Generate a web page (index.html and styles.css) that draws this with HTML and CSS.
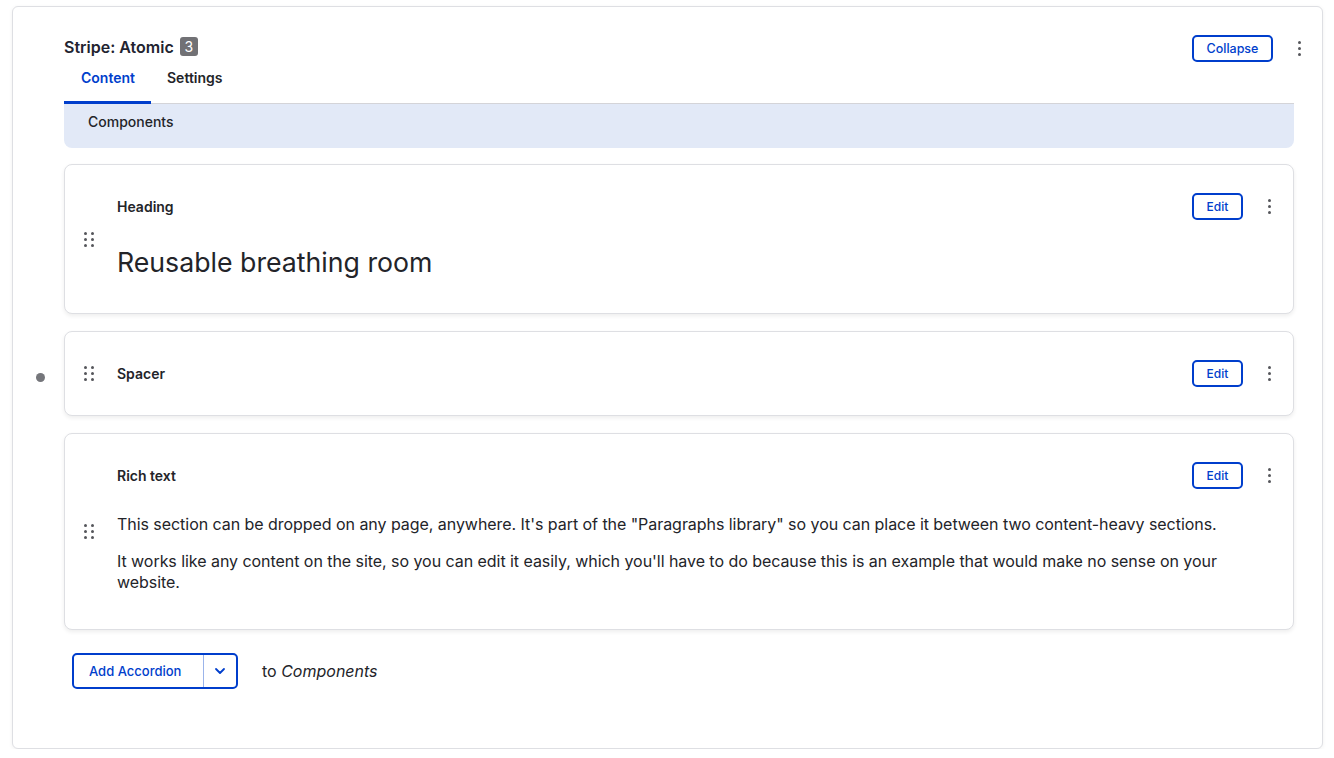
FILE: index.html
```html
<!DOCTYPE html>
<html lang="en">
<head>
<meta charset="utf-8">
<title>Stripe: Atomic</title>
<link rel="stylesheet" href="styles.css">
</head>
<body>
<div class="panel">
  <div class="panel-head">
    <div class="title">Stripe: Atomic <span class="badge">3</span></div>
    <div class="head-actions">
      <button class="btn btn-collapse">Collapse</button>
      <span class="kebab"><i></i><i></i><i></i></span>
    </div>
  </div>
  <div class="tabs">
    <span class="tab active">Content</span>
    <span class="tab">Settings</span>
  </div>
  <div class="section-bar">Components</div>

  <div class="card card-heading">
    <div class="handle"><span class="dots"><i></i><i></i><i></i><i></i><i></i><i></i></span></div>
    <div class="card-body">
      <div class="card-row">
        <span class="card-label">Heading</span>
        <div class="card-actions">
          <button class="btn btn-edit">Edit</button>
          <span class="kebab"><i></i><i></i><i></i></span>
        </div>
      </div>
      <div class="big-heading">Reusable breathing room</div>
    </div>
  </div>

  <div class="card card-spacer">
    <span class="status-dot"></span>
    <div class="handle"><span class="dots"><i></i><i></i><i></i><i></i><i></i><i></i></span></div>
    <div class="card-body">
      <div class="card-row">
        <span class="card-label">Spacer</span>
        <div class="card-actions">
          <button class="btn btn-edit">Edit</button>
          <span class="kebab"><i></i><i></i><i></i></span>
        </div>
      </div>
    </div>
  </div>

  <div class="card card-text">
    <div class="handle"><span class="dots"><i></i><i></i><i></i><i></i><i></i><i></i></span></div>
    <div class="card-body">
      <div class="card-row">
        <span class="card-label">Rich text</span>
        <div class="card-actions">
          <button class="btn btn-edit">Edit</button>
          <span class="kebab"><i></i><i></i><i></i></span>
        </div>
      </div>
      <div class="rich">
        <p>This section can be dropped on any page, anywhere. It's part of the "Paragraphs library" so you can place it between two content-heavy sections.</p>
        <p>It works like any content on the site, so you can edit it easily, which you'll have to do because this is an example that would make no sense on your website.</p>
      </div>
    </div>
  </div>

  <div class="add-row">
    <div class="split-btn">
      <span class="split-main">Add Accordion</span>
      <span class="split-toggle">
        <svg width="12" height="8" viewBox="0 0 12 8"><path d="M2 2l4 4 4-4" fill="none" stroke="#003ecc" stroke-width="1.8" stroke-linecap="round" stroke-linejoin="round"/></svg>
      </span>
    </div>
    <span class="add-to">to <em>Components</em></span>
  </div>
</div>
</body>
</html>
```

FILE: styles.css
```css
* { box-sizing: border-box; }
html, body { margin: 0; padding: 0; }
body {
  background: #ffffff;
  font-family: Inter, "Noto Sans", sans-serif;
  color: #232429;
}
.panel {
  margin: 6px 11px 0 12px;
  height: 743px;
  border: 1px solid #dedfe3;
  border-radius: 6px;
  background: #fff;
  box-shadow: 0 1px 4px rgba(0,0,0,0.06);
  padding: 27px 28px 0 51px;
}
.panel-head {
  display: flex;
  justify-content: space-between;
  align-items: center;
  margin-right: -10px;
  height: 26px;
}
.title {
  font-size: 16px;
  font-weight: 600;
  display: flex;
  align-items: center;
  gap: 6px;
  color: #222330;
  margin-top: -1px;
}
.badge {
  display: inline-block;
  background: #717175;
  color: #fff;
  font-size: 14px;
  font-weight: 400;
  border-radius: 3px;
  text-align: center;
  width: 18px;
  line-height: 19px;
  height: 19px;
}
.head-actions {
  display: flex;
  align-items: center;
  gap: 21px;
  padding-top: 2px;
}
.btn {
  font-family: Inter, "Noto Sans", sans-serif;
  background: #fff;
  color: #003ecc;
  border: 2px solid #003ecc;
  border-radius: 5px;
  font-weight: 500;
  cursor: pointer;
}
.btn-collapse {
  width: 81px;
  height: 27px;
  font-size: 12.5px;
  padding: 0;
}
.kebab {
  display: inline-flex;
  flex-direction: column;
  align-items: center;
  gap: 3px;
  width: 10px;
}
.kebab i {
  display: block;
  width: 3px;
  height: 3px;
  border-radius: 50%;
  background: #55565b;
}
.tabs {
  display: flex;
  margin-top: 3px;
  border-bottom: 1px solid #d4d4d8;
}
.tab {
  font-size: 14px;
  font-weight: 600;
  padding: 5px 16px 13px 16px;
  line-height: 20px;
  color: #232429;
  margin-bottom: -1px;
  border-bottom: 3px solid transparent;
}
.tab.active {
  color: #003ecc;
  border-bottom-color: #003ecc;
  padding-left: 17px;
  padding-right: 16px;
}
.section-bar {
  background: #e2e9f7;
  border-radius: 0 0 8px 8px;
  font-size: 14px;
  font-weight: 500;
  line-height: 20px;
  padding: 8px 24px 16px 24px;
  color: #232429;
}
.card {
  position: relative;
  display: flex;
  align-items: center;
  border: 1px solid #dedfe3;
  border-radius: 8px;
  background: #fff;
  box-shadow: 0 2px 4px rgba(0,0,0,0.07);
  margin-top: 17px;
}
.card-heading { margin-top: 16px; }
.handle {
  width: 52px;
  flex: none;
  display: flex;
  justify-content: center;
  padding-right: 5px;
}
.dots {
  display: grid;
  grid-template-columns: 3px 3px;
  column-gap: 4px;
  row-gap: 3px;
}
.dots i {
  display: block;
  width: 3px;
  height: 3px;
  border-radius: 50%;
  background: #55565b;
}
.card-body {
  flex: 1;
  padding: 27px 19px 0 0;
}
.card-row {
  display: flex;
  justify-content: space-between;
  align-items: center;
  height: 28px;
}
.card-label {
  font-size: 14px;
  font-weight: 600;
  color: #232429;
}
.card-actions {
  display: flex;
  align-items: center;
  gap: 21px;
}
.btn-edit {
  width: 51px;
  height: 27px;
  font-size: 12px;
  padding: 0;
}
.big-heading {
  font-size: 26.7px;
  line-height: 34px;
  font-weight: 400;
  color: #232429;
  margin-top: 25px;
  padding-bottom: 34px;
}
.card-spacer .card-body { padding-bottom: 28px; }
.rich {
  padding-top: 25px;
  padding-bottom: 36px;
  padding-right: 40px;
}
.rich p {
  margin: 0 0 16px 0;
  font-size: 16px;
  line-height: 21px;
  letter-spacing: -0.05px;
  color: #232429;
}
.rich p:last-child { margin-bottom: 0; }
.status-dot {
  position: absolute;
  left: -29px;
  top: 50%;
  width: 9px;
  height: 9px;
  margin-top: -1px;
  border-radius: 50%;
  background: #75767b;
}
.add-row {
  display: flex;
  align-items: center;
  margin-top: 23px;
  margin-left: 8px;
  gap: 24px;
}
.split-btn {
  display: flex;
  height: 36px;
  border: 2px solid #003ecc;
  border-radius: 5px;
  align-items: stretch;
}
.split-main {
  display: flex;
  align-items: center;
  width: 130px;
  padding-left: 15px;
  font-size: 13px;
  font-weight: 500;
  color: #003ecc;
  border-right: 1px solid #9bb4ea;
}
.split-toggle {
  display: flex;
  align-items: center;
  justify-content: center;
  width: 32px;
}
.add-to {
  font-size: 16px;
  color: #232429;
}
.add-to em { font-style: italic; }
```
